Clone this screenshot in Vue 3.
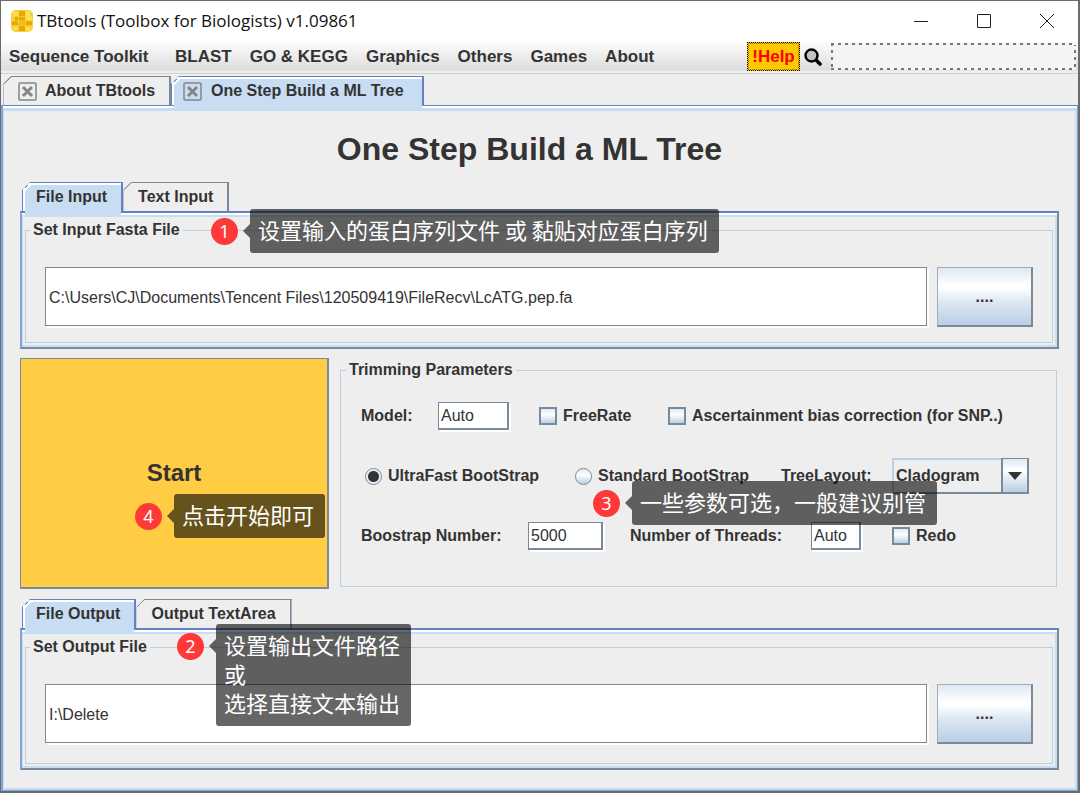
<script setup>
import { ref } from 'vue'

const menus = ['Sequence Toolkit', 'BLAST', 'GO & KEGG', 'Graphics', 'Others', 'Games', 'About']
const keyword = ref('')
const inputPath = ref('C:\\Users\\CJ\\Documents\\Tencent Files\\120509419\\FileRecv\\LcATG.pep.fa')
const outputPath = ref('I:\\Delete')
const model = ref('Auto')
const threads = ref('Auto')
const bootstrapNumber = ref('5000')
const bootstrap = ref('ultrafast')
const layout = ref('Cladogram')
const freeRate = ref(false)
const ascertainment = ref(false)
const redo = ref(false)
</script>

<template>
  <div class="window">
    <header class="titlebar">
      <svg class="logo" viewBox="0 0 22 22" aria-hidden="true">
        <rect width="22" height="22" rx="5" fill="#f8cf3a" />
        <path d="M8 1h6v5H8zM7 6h7v5H7zM1 11h6v5H1zM14 11h7v5h-7zM7 15h7v6H7zM4 6h3v5H4z" fill="#eaa900" />
        <path d="M2 2h5v4H2zM15 1h4v5h-4zM15 6h6v4h-6zM15 17h4v4h-4zM2 17h5v3H2z" fill="#ffe04e" />
        <path d="M7 11h7v4H7z" fill="#f3bb12" />
        <path d="M7.500 0v22M14.500 0v22M0 6.500h22M0 11h22M0 15.500h22" stroke="#f9d65c" stroke-width=".6" />
      </svg>
      <span class="caption">TBtools (Toolbox for Biologists) v1.09861</span>
      <div class="controls">
        <button type="button" aria-label="Minimize">
          <svg viewBox="0 0 14 14"><path d="M0 7.500h14" /></svg>
        </button>
        <button type="button" aria-label="Maximize">
          <svg viewBox="0 0 14 14"><path d="M.5.5h13v13H.5z" /></svg>
        </button>
        <button type="button" aria-label="Close">
          <svg viewBox="0 0 14 14"><path d="M0 0l14 14M14 0L0 14" /></svg>
        </button>
      </div>
    </header>

    <nav class="menubar">
      <button v-for="m in menus" :key="m" type="button" class="menu">{{ m }}</button>
      <div class="search">
        <button type="button" class="help">!Help</button>
        <svg class="lens" viewBox="0 0 18 18" aria-hidden="true">
          <path d="M11 11l5 5" stroke="#000" stroke-width="3.600" stroke-linecap="round" />
          <circle cx="7.500" cy="7.500" r="6" fill="#c4c4c4" stroke="#000" stroke-width="2.400" />
        </svg>
        <input v-model="keyword" type="text" class="keyword" aria-label="Search" />
      </div>
    </nav>

    <div class="tabs main-tabs" role="tablist">
      <button type="button" role="tab" class="tab">
        <svg class="x" viewBox="0 0 19 19" aria-hidden="true">
          <rect x="1" y="1" width="17" height="17" rx="1" /><path d="M5 5l9 9M14 5l-9 9" />
        </svg>
        About TBtools
      </button>
      <button type="button" role="tab" class="tab active" aria-selected="true">
        <svg class="x" viewBox="0 0 19 19" aria-hidden="true">
          <rect x="1" y="1" width="17" height="17" rx="1" /><path d="M5 5l9 9M14 5l-9 9" />
        </svg>
        One Step Build a ML Tree
      </button>
    </div>

    <main class="page">
      <h1>One Step Build a ML Tree</h1>

      <section class="file-section">
        <div class="tabs" role="tablist">
          <button type="button" role="tab" class="tab active" aria-selected="true">File Input</button>
          <button type="button" role="tab" class="tab">Text Input</button>
        </div>
        <div class="panel">
          <fieldset class="group">
            <legend>Set Input Fasta File</legend>
            <input v-model="inputPath" type="text" class="field path" aria-label="Input Fasta file" />
            <button type="button" class="browse" aria-label="Browse input">....</button>
          </fieldset>
        </div>
        <div class="note note-input">
          <span class="num">1</span>
          <p class="bubble">设置输入的蛋白序列文件 或 黏贴对应蛋白序列</p>
        </div>
      </section>

      <section class="run">
        <button type="button" class="start">Start</button>
        <fieldset class="group params">
          <legend>Trimming Parameters</legend>
          <div class="row">
            <label class="l-model" for="model">Model:</label>
            <input id="model" v-model="model" type="text" class="field f-model" />
            <label class="option o-free"><input v-model="freeRate" type="checkbox" />FreeRate</label>
            <label class="option"><input v-model="ascertainment" type="checkbox" />Ascertainment bias correction (for SNP..)</label>
          </div>
          <div class="row">
            <label class="option o-ultra"><input v-model="bootstrap" type="radio" name="bootstrap" value="ultrafast" />UltraFast BootStrap</label>
            <label class="option o-standard"><input v-model="bootstrap" type="radio" name="bootstrap" value="standard" />Standard BootStrap</label>
            <label class="l-layout" for="layout">TreeLayout:</label>
            <div class="combo">
              <select id="layout" v-model="layout">
                <option>Cladogram</option>
                <option>Phylogram</option>
              </select>
              <span class="arrow"><svg viewBox="0 0 14 8" aria-hidden="true"><path d="M0 0h14L7 8z" /></svg></span>
            </div>
          </div>
          <div class="row">
            <label class="l-boot" for="boot">Boostrap Number:</label>
            <input id="boot" v-model="bootstrapNumber" type="text" class="field f-boot" />
            <label class="l-threads" for="threads">Number of Threads:</label>
            <input id="threads" v-model="threads" type="text" class="field f-threads" />
            <label class="option"><input v-model="redo" type="checkbox" />Redo</label>
          </div>
        </fieldset>
        <div class="note note-start">
          <span class="num">4</span>
          <p class="bubble">点击开始即可</p>
        </div>
        <div class="note note-params">
          <span class="num">3</span>
          <p class="bubble">一些参数可选，一般建议别管</p>
        </div>
      </section>

      <section class="file-section">
        <div class="tabs" role="tablist">
          <button type="button" role="tab" class="tab active" aria-selected="true">File Output</button>
          <button type="button" role="tab" class="tab">Output TextArea</button>
        </div>
        <div class="panel panel-output">
          <fieldset class="group">
            <legend>Set Output File</legend>
            <input v-model="outputPath" type="text" class="field path" aria-label="Output file" />
            <button type="button" class="browse" aria-label="Browse output">....</button>
          </fieldset>
        </div>
        <div class="note note-output">
          <span class="num">2</span>
          <p class="bubble">设置输出文件路径<br />或<br />选择直接文本输出</p>
        </div>
      </section>
    </main>
  </div>
</template>

<style>
body {
  margin: 0;
  background: #eee;
}
</style>

<style scoped>
* {
  box-sizing: border-box;
}
.window {
  display: flex;
  flex-direction: column;
  min-height: 100vh;
  border: solid #6b6b6d;
  border-width: 1px 2px 2px 1px;
  background: #eee;
  color: #333;
  font: bold 16px/20px "Liberation Sans", Arial, sans-serif;
}
button,
input,
select {
  margin: 0;
  padding: 0;
  border: 0;
  border-radius: 0;
  background: none;
  color: inherit;
  font: inherit;
}
.titlebar {
  display: flex;
  align-items: center;
  height: 39px;
  padding-left: 10px;
  background: #fff;
}
.logo {
  width: 22px;
  height: 22px;
}
.caption {
  margin-left: 4px;
  color: #111;
  font: 17px/22px "Open Sans", "Noto Sans", sans-serif;
}
.controls {
  display: flex;
  margin-left: auto;
}
.controls button {
  display: flex;
  align-items: center;
  justify-content: center;
  width: 63px;
  height: 38px;
}
.controls svg {
  width: 14px;
  height: 14px;
  overflow: visible;
  fill: none;
  stroke: #222;
  stroke-width: 1;
}
.menubar {
  display: flex;
  align-items: center;
  gap: 18px;
  height: 34px;
  padding: 0 2px 0 8px;
  border-bottom: 1px solid #d2d2d2;
  background: linear-gradient(#fff, #dcdcdc 92%, #eee 93%);
  font-size: 17px;
}
.menu {
  white-space: nowrap;
  text-align: left;
}
.menu:first-child {
  min-width: 148px;
}
.search {
  display: flex;
  align-items: center;
  width: 329px;
  margin-left: auto;
}
.help {
  width: 53px;
  height: 29px;
  border: 1px dotted #000;
  outline: 1px dotted #8a6a00;
  outline-offset: -2px;
  background: #ffc800;
  color: #f00;
}
.lens {
  width: 18px;
  height: 18px;
  margin: 0 9px 0 4px;
}
.keyword {
  flex: 1;
  min-width: 0;
  height: 27px;
  padding: 0 4px;
  background:
    repeating-linear-gradient(90deg, #777 0 3px, #f4f4f4 3px 7px) top / 100% 2px no-repeat,
    repeating-linear-gradient(90deg, #777 0 3px, #f4f4f4 3px 7px) bottom / 100% 2px no-repeat,
    repeating-linear-gradient(#777 0 3px, #f4f4f4 3px 7px) left / 2px 100% no-repeat,
    repeating-linear-gradient(#777 0 3px, #f4f4f4 3px 7px) right / 2px 100% no-repeat,
    #f4f4f4;
}

.tabs {
  position: relative;
  z-index: 1;
  display: flex;
  padding-left: 2px;
}
.tab {
  display: flex;
  align-items: center;
  height: 29px;
  padding: 0 14px;
  border: 1px solid #7a8a99;
  border-right-width: 2px;
  border-bottom: 0;
  border-left-color: #b4bec8;
  background: linear-gradient(135deg, #7a8a99 7px, #eee 7px) border-box;
  clip-path: polygon(8px 0, 100% 0, 100% 100%, 0 100%, 0 8px);
  white-space: nowrap;
}
.tab.active {
  position: relative;
  padding: 0 14px 0 13px;
  border-color: #6382bf;
  background: linear-gradient(135deg, #6382bf 7px, #fff 7px, #fff 9px, #c8ddf2 9px) border-box;
  box-shadow: inset 2px 2px #fff;
  clip-path: polygon(8px 0, 100% 0, 100% 100%, 100% calc(100% + 5px), 0 calc(100% + 5px), 0 8px);
}
/* joins the selected tab to the panel below it */
.tab.active::after {
  content: '';
  position: absolute;
  top: 100%;
  right: 0;
  left: 2px;
  height: 5px;
  background: #c8ddf2;
}
.main-tabs {
  padding: 2px 0 0 2px;
}
.main-tabs .tab {
  min-width: 168px;
  padding: 0 0 0 14px;
}
.main-tabs .tab.active {
  min-width: 253px;
  padding-left: 11px;
}
.x {
  width: 19px;
  height: 19px;
  margin-right: 8px;
  fill: none;
  stroke: #858585;
  stroke-width: 1.500;
}
.main-tabs .active .x {
  margin-right: 9px;
}
.x path {
  stroke-width: 3;
}
.page {
  display: flex;
  flex: 1;
  flex-direction: column;
  padding: 25px 18px 20px 17px;
  border: solid #84a5d3;
  border-width: 1px 1px 1px 2px;
  border-top-color: #6382bf;
  box-shadow: inset 0 2px #fff, inset 0 5px #c8ddf2, inset -2px -2px #c8ddf2, inset 1px 0 #c8ddf2;
}
h1 {
  margin: 0 20px 14px 0;
  font-size: 32px;
  line-height: 37px;
  text-align: center;
}
.file-section,
.run {
  position: relative;
}
.panel {
  padding: 7px 4px 4px 3px;
  border: 2px solid #7a8a99;
  border-top-color: #6382bf;
  border-left-color: #84a5d3;
  box-shadow: inset 0 2px #fff, inset 0 4px #c8ddf2, inset -2px -2px #c8ddf2, inset 1px 0 #c8ddf2;
}
.group {
  display: flex;
  min-width: 0;
  margin: 0;
  border: 1px solid #b8cfe5;
}
.panel .group {
  gap: 10px;
  padding: 27px 19px 15px;
}
.panel-output .group {
  padding-bottom: 19px;
}
legend {
  padding: 0 3px;
}
.panel legend {
  margin-left: -15px;
}
.field {
  min-width: 0;
  border: 1px solid #7a8a99;
  box-shadow: 2px 2px #fff;
  background: #fff;
  font-weight: 400;
}
.path {
  flex: 1;
  height: 59px;
  padding: 2px 3px 0;
}
.browse {
  width: 96px;
  height: 60px;
  border: 1px solid #a0adba;
  border-right: 2px solid #7a8a99;
  border-bottom: 2px solid #7a8a99;
  background: linear-gradient(#dde8f3, #fff 30%, #fff 35%, #dce7f2 60%, #b8cfe5);
}
.run {
  display: grid;
  grid-template-columns: 309px 1fr;
  gap: 11px;
  margin: 9px 0 10px;
}
.start {
  height: 231px;
  border: 1px solid #7a8a99;
  border-right-width: 2px;
  border-bottom-width: 2px;
  background: #ffcc44;
  font-size: 24px;
}
.params {
  display: block;
  margin: 2px 2px 2px 0;
  padding: 0 0 0 20px;
}
.params legend {
  margin-left: -15px;
}
.row {
  display: flex;
  align-items: center;
  height: 60px;
  white-space: nowrap;
}
.row:first-of-type {
  margin-top: 6px;
}
.row .field {
  height: 28px;
  padding: 0 2px;
  border-right-width: 2px;
  border-bottom-width: 2px;
}
.l-model {
  width: 77px;
}
.f-model {
  width: 71px;
  margin-right: 30px;
}
.option {
  display: flex;
  align-items: center;
  gap: 6px;
}
.o-free {
  width: 129px;
}
.o-ultra {
  width: 210px;
  padding-left: 4px;
}
.o-standard {
  width: 210px;
  padding-left: 4px;
}
.l-layout {
  width: 111px;
}
.l-boot {
  width: 167px;
}
.f-boot {
  width: 75px;
  margin-right: 27px;
}
.l-threads {
  width: 181px;
}
.f-threads {
  width: 50px;
  margin-right: 31px;
}
input[type='checkbox'] {
  width: 18px;
  height: 18px;
  border: 2px solid #7a8a99;
  appearance: none;
  background: linear-gradient(#dde8f3, #fff 40%, #b8cfe5);
}
input[type='radio'] {
  width: 17px;
  height: 17px;
  border: 1px solid #7a8a99;
  border-radius: 50%;
  appearance: none;
  background: linear-gradient(#dde8f3, #fff 40%, #b8cfe5);
}
input[type='radio']:checked {
  background: radial-gradient(circle, #333 5px, #e6eef6 6px);
}
.combo {
  position: relative;
  display: flex;
  width: 137px;
  height: 36px;
}
.combo select {
  width: 100%;
  padding-left: 2px;
  border: 2px solid #b8cfe5;
  border-bottom-color: #7a8a99;
  appearance: none;
}
.arrow {
  position: absolute;
  inset: 0 0 0 auto;
  display: flex;
  align-items: center;
  justify-content: center;
  width: 28px;
  border: 2px solid #7a8a99;
  border-top-width: 1px;
  background: linear-gradient(#dde8f3, #fff 34%, #b8cfe5);
  pointer-events: none;
}
.arrow svg {
  width: 14px;
  height: 8px;
  fill: #333;
}

/* numbered annotations floating over the form */
.note {
  position: absolute;
  z-index: 2;
  display: flex;
  align-items: flex-start;
  gap: 12px;
  color: #fff;
  white-space: nowrap;
  pointer-events: none;
}
.num {
  width: 27px;
  height: 27px;
  margin-top: 9px;
  border-radius: 50%;
  background: #ff3838;
  font: 18px/26px "Noto Sans", sans-serif;
  text-align: center;
}
.bubble {
  position: relative;
  margin: 0;
  padding: 6px 11px 9px 8px;
  border-radius: 3px;
  background: rgba(0, 0, 0, 0.6);
  font: 22px/29px "Noto Sans CJK SC", sans-serif;
}
.bubble::before {
  content: '';
  position: absolute;
  top: 15px;
  right: 100%;
  border: solid transparent;
  border-width: 7px 7px 7px 0;
  border-right-color: rgba(0, 0, 0, 0.6);
}
.note-input {
  top: 27px;
  left: 191px;
}
.note-start {
  top: 136px;
  left: 115px;
}
.note-params {
  top: 123px;
  left: 573px;
}
.note-output {
  top: 25px;
  left: 157px;
}
</style>
